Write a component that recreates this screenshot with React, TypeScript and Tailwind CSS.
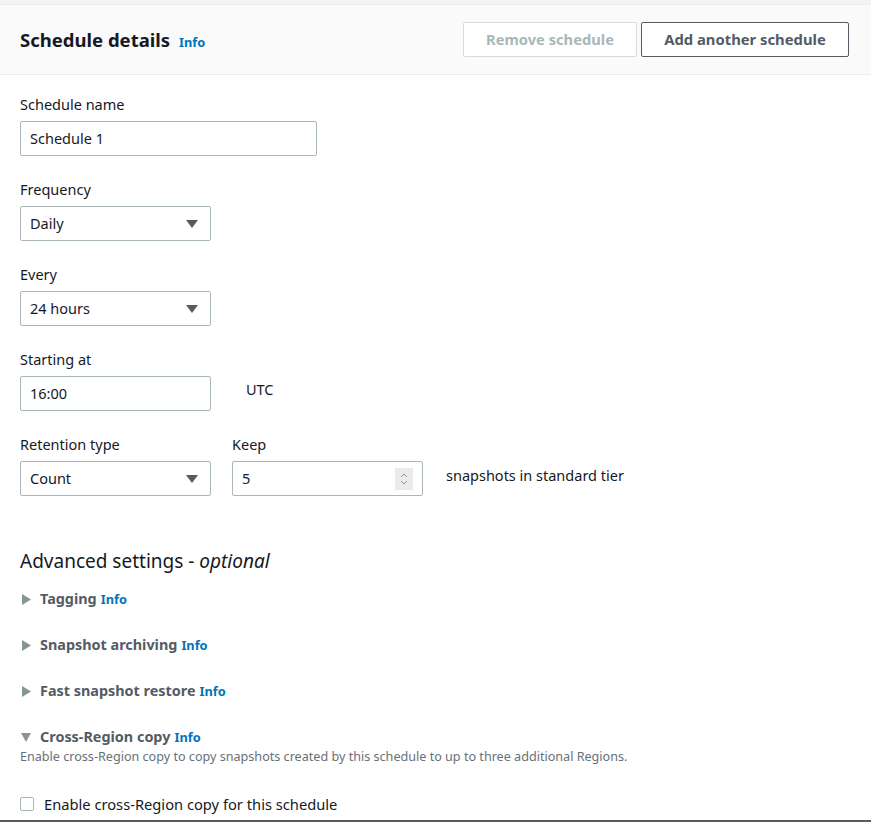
import React from 'react';

const font = { fontFamily: '"Noto Sans", "Open Sans", sans-serif' };

const Info = () => (
  <span className="ml-[4px] text-[12.8px] font-bold text-[#0073bb]">Info</span>
);

const Caret = () => (
  <svg width="12" height="8" viewBox="0 0 12 8" className="shrink-0">
    <path d="M0 0 L12 0 L6 8 Z" fill="#545b64" />
  </svg>
);

const Select = ({ value }: { value: string }) => (
  <div className="flex h-[35px] w-[191px] items-center justify-between rounded-[2px] border border-[#aab7b8] bg-white pl-[9px] pr-[12px] text-[14.5px] text-[#16191f]">
    <span>{value}</span>
    <Caret />
  </div>
);

const Field = ({ label, children }: { label: string; children: React.ReactNode }) => (
  <div className="flex flex-col">
    <label className="h-[22px] text-[14.5px] leading-[22px] text-[#16191f]">{label}</label>
    <div className="mt-[6px]">{children}</div>
  </div>
);

const Expander = ({ title, open }: { title: string; open?: boolean }) => (
  <div className="flex h-[22px] items-center">
    <span className="flex w-[20px] shrink-0 items-center">
      {open ? (
        <svg width="10" height="9" viewBox="0 0 10 9" className="ml-[1px]">
          <path d="M0 0 L10 0 L5 9 Z" fill="#879596" />
        </svg>
      ) : (
        <svg width="9" height="11" viewBox="0 0 9 11" className="ml-[2px]">
          <path d="M0 0 L9 5.5 L0 11 Z" fill="#879596" />
        </svg>
      )}
    </span>
    <span className="flex items-baseline">
      <span className="text-[14.4px] font-bold text-[#545b64]">{title}</span>
      <Info />
    </span>
  </div>
);

export default function App() {
  return (
    <div className="relative h-[822px] w-full overflow-hidden bg-white" style={font}>
      <div className="h-[4px] bg-[#f2f3f3]" />
      <div className="flex h-[71px] items-center justify-between border-y border-[#eaeded] bg-[#fafafa] pl-[20px] pr-[22px]">
        <div className="flex items-baseline">
          <h2 className="text-[18.5px] font-bold text-[#16191f]">Schedule details</h2>
          <span className="ml-[9px] text-[12.8px] font-bold text-[#0073bb]">Info</span>
        </div>
        <div className="flex gap-[4px]">
          <button className="h-[35px] w-[174px] rounded-[2px] border border-[#d5dbdb] bg-white text-[14.7px] font-bold text-[#aab7b8]">
            Remove schedule
          </button>
          <button className="h-[35px] w-[208px] rounded-[2px] border border-[#545b64] bg-white text-[14.8px] font-bold text-[#545b64]">
            Add another schedule
          </button>
        </div>
      </div>

      <div className="flex flex-col gap-[22px] px-[20px] pt-[18px]">
        <Field label="Schedule name">
          <div className="flex h-[35px] w-[297px] items-center rounded-[2px] border border-[#aab7b8] px-[9px] text-[14.5px] text-[#16191f]">
            Schedule 1
          </div>
        </Field>
        <Field label="Frequency">
          <Select value="Daily" />
        </Field>
        <Field label="Every">
          <Select value="24 hours" />
        </Field>
        <div className="flex items-start gap-[35px]">
          <Field label="Starting at">
            <div className="flex h-[35px] w-[191px] items-center rounded-[2px] border border-[#aab7b8] px-[9px] text-[14.5px] text-[#16191f]">
              16:00
            </div>
          </Field>
          <span className="mt-[31px] text-[14.5px] text-[#16191f]">UTC</span>
        </div>
        <div className="flex items-start">
          <Field label="Retention type">
            <Select value="Count" />
          </Field>
          <div className="ml-[21px]">
            <Field label="Keep">
              <div className="flex h-[35px] w-[191px] items-center justify-between rounded-[2px] border border-[#aab7b8] pl-[9px] pr-[9px] text-[14.5px] text-[#16191f]">
                <span>5</span>
                <span className="flex h-[22px] w-[18px] flex-col items-center justify-center bg-[#e9ebed]">
                  <svg width="8" height="14" viewBox="0 0 8 14">
                    <path d="M1 5 L4 2 L7 5 M1 9 L4 12 L7 9" fill="none" stroke="#879596" strokeWidth="1" />
                  </svg>
                </span>
              </div>
            </Field>
          </div>
          <span className="ml-[23px] mt-[32px] text-[14.5px] text-[#16191f]">snapshots in standard tier</span>
        </div>

        <div className="mt-[31px] flex flex-col">
          <h3 className="h-[24px] text-[19px] leading-[24px] text-[#16191f]">
            Advanced settings - <em>optional</em>
          </h3>
          <div className="mt-[15px] flex flex-col gap-[24px]">
            <Expander title="Tagging" />
            <Expander title="Snapshot archiving" />
            <Expander title="Fast snapshot restore" />
            <div className="flex flex-col">
              <Expander title="Cross-Region copy" open />
              <p className="text-[12.6px] leading-[18px] text-[#687078]">
                Enable cross-Region copy to copy snapshots created by this schedule to up to three additional Regions.
              </p>
              <label className="mt-[27px] flex items-center">
                <span className="h-[14px] w-[14px] rounded-[2px] border border-[#aab7b8] bg-white" />
                <span className="ml-[10px] text-[14.7px] text-[#16191f]">Enable cross-Region copy for this schedule</span>
              </label>
            </div>
          </div>
        </div>
      </div>

      <div className="absolute bottom-0 left-0 h-[2px] w-full bg-[#545b64]" />
    </div>
  );
}
